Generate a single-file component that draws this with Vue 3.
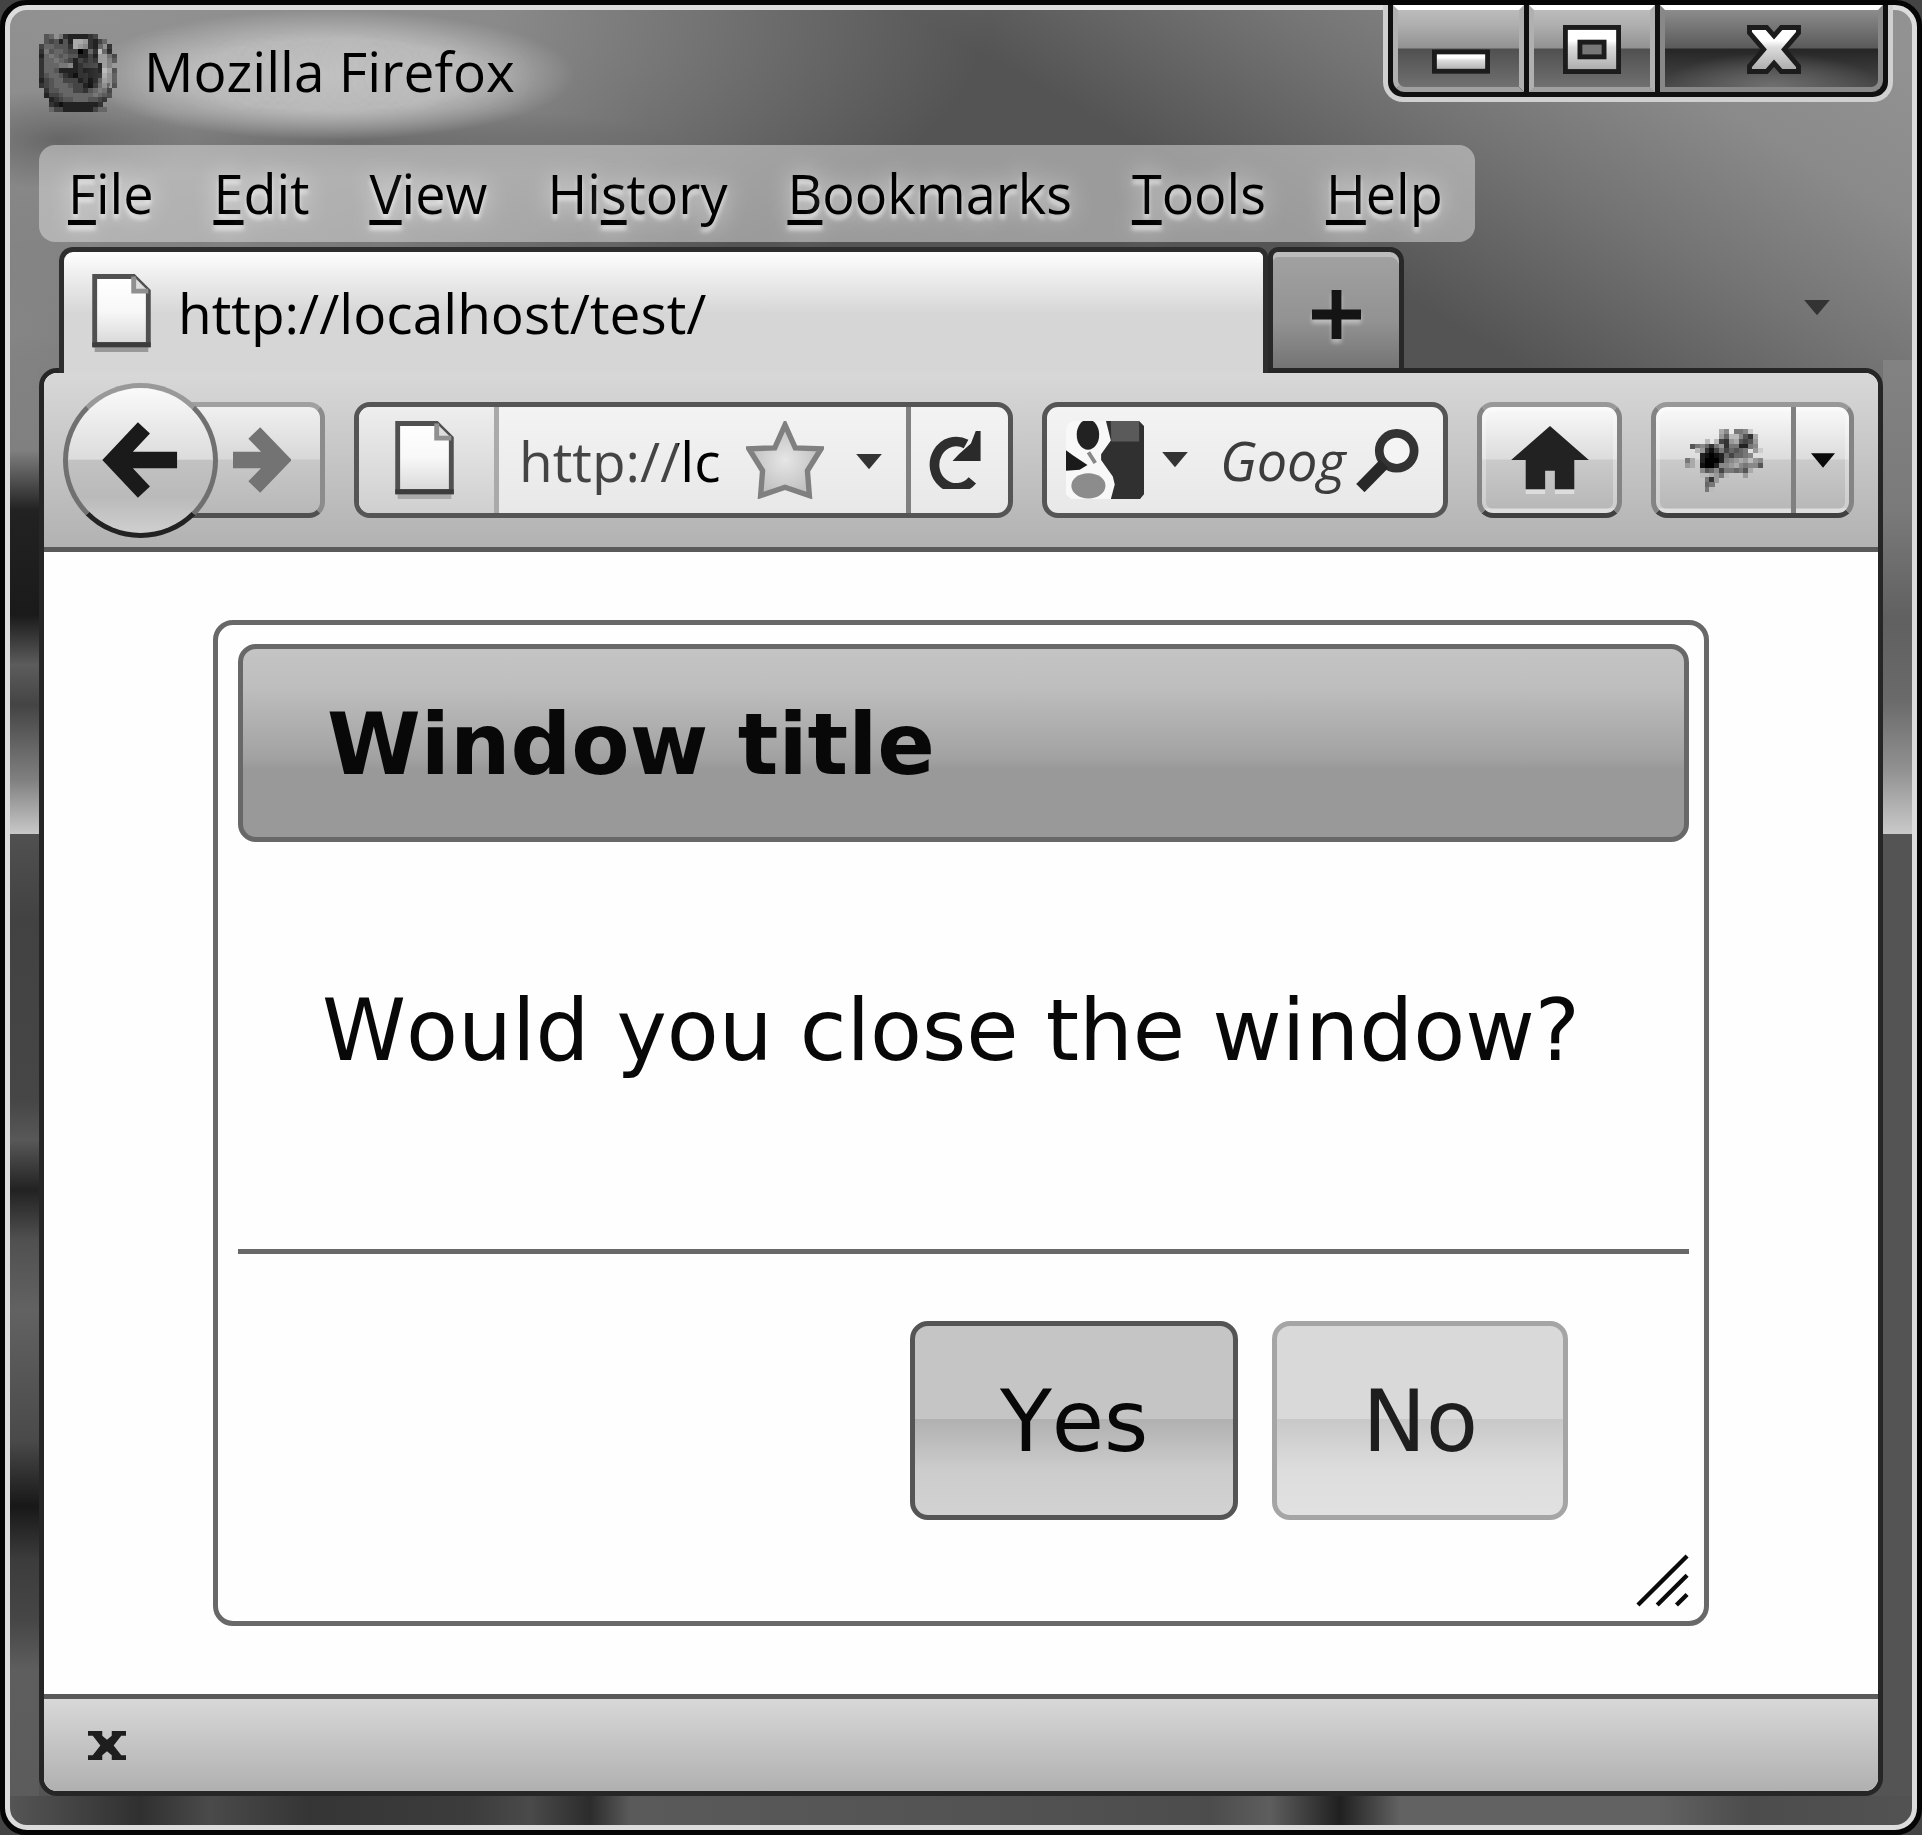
<script setup>
import { ref } from 'vue'

const menus = [
  ['', 'F', 'ile'],
  ['', 'E', 'dit'],
  ['', 'V', 'iew'],
  ['Hi', 's', 'tory'],
  ['', 'B', 'ookmarks'],
  ['', 'T', 'ools'],
  ['', 'H', 'elp'],
]

const address = ref('http://lc')
const query = ref('Goog')

// Each character is one grey level of a 16-column bitmap; a dot is transparent.
const firefoxRows = [
  '.56.73222234....',
  '.545252aa93246..',
  '46655.3a98326.3.',
  '375665440263b62.',
  '267656.522429963',
  '36676.4243439974',
  '366677823444197.',
  '3665222232221b93',
  '3566532133222a84',
  '2456644423125984',
  '34566654421368.3',
  '.35566644356763.',
  '.24456666667654.',
  '..234556665543..',
  '..32122222223...',
  '..644222222466..',
]
const bugRows = [
  '.......a8.778c..',
  '.......96bb853a.',
  '....b.b439a5459.',
  '.57863793772278.',
  '..b9314746567.9c',
  '...21012646678..',
  '7a.20002789a9b98',
  '9a.1002889a87885',
  '...8568477675a..',
  '...bba97b...9...',
  '....739.........',
  '....67..........',
  '....7b..........',
]
const toPixels = (rows) =>
  rows.flatMap((row, y) =>
    [...row].flatMap((c, x) => (/[0-9a-f]/.test(c) ? [{ x, y, fill: `#${c}${c}${c}` }] : [])),
  )
const firefoxPixels = toPixels(firefoxRows)
const bugPixels = toPixels(bugRows)
</script>

<template>
  <div class="window">
    <div class="glass">
      <header class="titlebar">
        <div class="caption">
          <svg class="logo" viewBox="0 0 16 16" shape-rendering="crispEdges" aria-hidden="true">
            <ellipse cx="8" cy="8" rx="7" ry="7" fill="#555" />
            <rect v-for="(p, i) in firefoxPixels" :key="i" :x="p.x" :y="p.y" width="1.04" height="1.04" :fill="p.fill" />
          </svg>
          <h1 class="name">Mozilla Firefox</h1>
        </div>
        <div class="controls">
          <button class="control minimize" type="button" aria-label="Minimize">
            <svg viewBox="0 0 12 10" width="58" height="49" aria-hidden="true">
              <rect x="0.5" y="5.5" width="11" height="4" fill="url(#metal)" stroke="#1c1c1c" />
            </svg>
          </button>
          <button class="control maximize" type="button" aria-label="Maximize">
            <svg viewBox="0 0 12 10" width="58" height="49" preserveAspectRatio="none" aria-hidden="true">
              <defs>
                <linearGradient id="metal" x1="0" y1="0" x2="0" y2="1">
                  <stop offset="0.3" stop-color="#fff" />
                  <stop offset="0.45" stop-color="#dcdcdc" />
                  <stop offset="1" stop-color="#a8a8a8" />
                </linearGradient>
              </defs>
              <rect x="0.5" y="0.5" width="11" height="9" fill="url(#metal)" stroke="#1c1c1c" />
              <rect x="3.5" y="3.5" width="5" height="3" fill="#777" stroke="#1c1c1c" />
            </svg>
          </button>
          <button class="control close" type="button" aria-label="Close">
            <svg viewBox="0 0 11 10" width="54" height="49" aria-hidden="true">
              <path d="M.5.5H4L5.5 2.2 7 .5H10.5V1.6L7.6 5 10.5 8.4V9.5H7L5.5 7.8 4 9.5H.5V8.4L3.4 5 .5 1.6Z" fill="url(#metal)" stroke="#1c1c1c" />
            </svg>
          </button>
        </div>
      </header>

      <nav class="menubar">
        <button v-for="m in menus" :key="m.join('')" class="menu" type="button">{{ m[0] }}<span class="key">{{ m[1] }}</span>{{ m[2] }}</button>
      </nav>

      <div class="tabs">
        <div class="tab">
          <svg class="page-icon" viewBox="0 0 12 16" aria-hidden="true">
            <path d="M.5 15.5H11.5" stroke="#999" />
            <path d="M.5.5H8.5L11.5 3.5V14.5H.5Z" fill="url(#paper)" stroke="#505050" />
            <path d="M8.5.5V3.5H11.5" fill="#ddd" stroke="#909090" />
            <path d="M0 14.5H12" stroke="#3c3c3c" />
            <defs>
              <linearGradient id="paper" x1="0" y1="0" x2="0" y2="1">
                <stop offset="0" stop-color="#fff" />
                <stop offset="0.5" stop-color="#f8f8f8" />
                <stop offset="1" stop-color="#d8d8d8" />
              </linearGradient>
            </defs>
          </svg>
          <span>http://localhost/test/</span>
        </div>
        <button class="new-tab" type="button" aria-label="Open a new tab">
          <svg viewBox="0 0 10 10" width="49" height="49" aria-hidden="true">
            <path d="M5 0V10M0 5H10" stroke="#141414" stroke-width="2" />
          </svg>
        </button>
        <div class="tab-space">
          <button class="bare" type="button" aria-label="List all tabs">
            <svg class="arrow" viewBox="0 0 7 4" aria-hidden="true"><path d="M.8.2H6.2L3.5 3.4Z" fill="#333" /></svg>
          </button>
        </div>
      </div>

      <main class="client">
        <div class="toolbar">
          <div class="history">
            <button class="back" type="button" aria-label="Back">
              <svg viewBox="0 0 16 16" width="78" height="78" aria-hidden="true">
                <path d="M8.6 1.4 2.4 8 8.6 14.6M2.4 8H15.4" fill="none" stroke="#1a1a1a" stroke-width="3.4" />
              </svg>
            </button>
            <button class="forward" type="button" aria-label="Forward">
              <svg viewBox="0 0 12 14" width="58" height="68" aria-hidden="true">
                <path d="M4.4 1.4 9.8 7 4.4 12.6M0 7H9.8" fill="none" stroke="#737373" stroke-width="3.4" />
              </svg>
            </button>
          </div>

          <div class="field location">
            <button class="identity" type="button" aria-label="Site identity">
              <svg class="page-icon" viewBox="0 0 12 16" aria-hidden="true">
                <path d="M.5 15.5H11.5" stroke="#aaa" />
                <path d="M.5.5H8.5L11.5 3.5V14.5H.5Z" fill="url(#paper)" stroke="#505050" />
                <path d="M8.5.5V3.5H11.5" fill="#ddd" stroke="#909090" />
                <path d="M0 14.5H12" stroke="#3c3c3c" />
              </svg>
            </button>
            <input v-model="address" class="address" type="text" aria-label="Address" />
            <button class="bare" type="button" aria-label="Bookmark this page">
              <svg viewBox="0 0 16 16" width="78" height="78" aria-hidden="true">
                <defs>
                  <radialGradient id="star-fill">
                    <stop offset="0" stop-color="#e6e6e6" />
                    <stop offset="1" stop-color="#c0c0c0" />
                  </radialGradient>
                </defs>
                <path d="M8 .8 10.1 5.5 15.4 5.7 12.6 10.2 13 15.3 8 13.6 3 15.3 3.4 10.2.6 5.7 5.9 5.5Z" fill="url(#star-fill)" stroke="#808080" stroke-width="1.1" />
              </svg>
            </button>
            <button class="bare recent" type="button" aria-label="Show history">
              <svg class="arrow" viewBox="0 0 7 4" aria-hidden="true"><path d="M.8.2H6.2L3.5 3.4Z" fill="#333" /></svg>
            </button>
            <button class="reload" type="button" aria-label="Reload">
              <svg viewBox="0 0 11 12" width="54" height="58" aria-hidden="true">
                <path d="M9.3 10.2A4.5 4.8 0 1 1 8 2.7" fill="none" stroke="#2e2e2e" stroke-width="2" />
                <path d="M11 0V6.2H5.2L6.5 4.8 9 2.6 10 0Z" fill="#2a2a2a" />
              </svg>
            </button>
          </div>

          <div class="field search">
            <button class="bare engine" type="button" aria-label="Choose search engine">
              <svg viewBox="0 0 16 16" width="78" height="78" aria-hidden="true">
                <path d="M0 2Q0 0 2 0H15.4L16 1V15L15.4 16H1L0 15Z" fill="#f8f8f8" />
                <path d="M8.2 0H15L16 1V15L15.2 16H9.2L10 13 9.6 11.4 7.2 8V6.8L9.2 4Z" fill="#303030" />
                <path d="M9.2 0H15V4.2H9.3Z" fill="#5a5a5a" />
                <ellipse cx="4.5" cy="2.8" rx="2.3" ry="3.1" fill="#222" />
                <path d="M0 6 1.4 7 4.4 9 2.8 10 0 10.2Z" fill="#1a1a1a" />
                <path d="M4.6 6.4 6 8.6" stroke="#888" stroke-width="0.8" />
                <ellipse cx="4.6" cy="13.3" rx="3.5" ry="2.6" fill="#8c8c8c" />
              </svg>
              <svg class="arrow" viewBox="0 0 7 4" aria-hidden="true"><path d="M.8.2H6.2L3.5 3.4Z" fill="#333" /></svg>
            </button>
            <input v-model="query" class="query" type="text" aria-label="Search" />
            <button class="bare" type="button" aria-label="Search the web">
              <svg viewBox="0 0 13 13" width="63" height="63" aria-hidden="true">
                <ellipse cx="8.4" cy="4.5" rx="3.6" ry="3.6" fill="#f4f4f4" stroke="#333" stroke-width="1.8" />
                <path d="M5.8 7.2.9 12.2" stroke="#282828" stroke-width="2.4" />
              </svg>
            </button>
          </div>

          <button class="tool home" type="button" aria-label="Home">
            <svg viewBox="0 0 16 14" width="78" height="68" aria-hidden="true">
              <path d="M3 13.5H7M9 13.5H13" stroke="#ddd" />
              <path d="M8 0 16 7H13V13H9V9.2H7V13H3V7H0Z" fill="#222" />
            </svg>
          </button>

          <div class="tool debug">
            <button class="bare bug" type="button" aria-label="Inspect with Firebug">
              <svg viewBox="0 0 16 13" width="78" height="63" shape-rendering="crispEdges" aria-hidden="true">
                <rect v-for="(p, i) in bugPixels" :key="i" :x="p.x" :y="p.y" width="1.04" height="1.04" :fill="p.fill" />
              </svg>
            </button>
            <button class="bare options" type="button" aria-label="Firebug options">
              <svg viewBox="0 0 5 3" width="24" height="15" aria-hidden="true"><path d="M0 0H5L2.5 3Z" fill="#0a0a0a" /></svg>
            </button>
          </div>
        </div>

        <div class="page">
          <section class="dialog" role="dialog" aria-labelledby="dialog-title">
            <h2 id="dialog-title" class="dialog-title">Window title</h2>
            <p class="dialog-text">Would you close the window?</p>
            <div class="dialog-actions">
              <button class="action yes" type="button">Yes</button>
              <button class="action no" type="button">No</button>
            </div>
            <svg class="grip" viewBox="0 0 11 11" aria-hidden="true">
              <path d="M.4 10.6 10.6.4M4.4 10.6 10.6 4.4M8.4 10.6 10.6 8.4" stroke="#0a0a0a" stroke-width="0.9" />
            </svg>
          </section>
        </div>

        <footer class="status">
          <button class="bare" type="button" aria-label="Close the add-on bar">
            <svg viewBox="0 0 8 6" width="38" height="29" preserveAspectRatio="none" aria-hidden="true">
              <path d="M0 0H3V1L4 1.8 5 1V0H8V1H7L5.4 3 7 5H8V6H5V5L4 4.2 3 5V6H0V5H1L2.6 3 1 1H0Z" fill="#1e1e1e" />
            </svg>
          </button>
        </footer>
      </main>
    </div>
  </div>
</template>

<style>
body {
  margin: 0;
  background: #444;
}
</style>

<style scoped>
* {
  box-sizing: border-box;
}
button,
input {
  margin: 0;
  padding: 0;
  border: 0;
  background: none;
  color: inherit;
  font: inherit;
}
svg {
  display: block;
  flex: none;
}
.window {
  display: flex;
  min-height: 100vh;
  border: 5px solid #050505;
  border-radius: 26px;
  background: #050505;
  font-family: "Open Sans", "Noto Sans", sans-serif;
  font-kerning: none;
  color: #000;
}
.glass {
  flex: 1;
  min-width: 0;
  display: flex;
  flex-direction: column;
  padding: 0 29px 29px;
  border: 5px solid #dcdcdc;
  border-radius: 22px;
  background:
    linear-gradient(90deg, #555 0, #4a4a4a 40px, #303030 130px, #4a4a4a 200px, #353535 300px, #3c3c3c 460px, #4a4a4a 520px, #2c2c2c 580px, #5a5a5a 620px, #525252 1000px, #4c4c4c 1200px, #5e5e5e 1260px, #202020 1330px, #626262 1390px, #626262 1650px, #4c4c4c 1740px, #525252 100%) 0 100% / 100% 29px no-repeat,
    linear-gradient(#828282 0, #808080 90px, #222 150px, #1a1a1a 255px, #5c5c5c 305px, #444 345px, #808080 420px, #c8c8c8 474px, #505050 474px, #424242 560px, #464646 740px, #585858 780px, #222 830px, #505050 880px, #626262 950px, #4a4a4a 1080px, #181818 1146px, #3c3c3c 1200px, #464646 1260px, #5e5e5e 1310px, #545454 100%) 0 350px / 29px 100% no-repeat,
    linear-gradient(#828282 0, #7a7a7a 150px, #606060 260px, #6a6a6a 340px, #919191 410px, #cacaca 474px, #545454 474px, #545454 100%) 100% 350px / 29px 100% no-repeat,
    radial-gradient(ellipse 330px 36px at 340px 132px, rgba(80, 80, 80, 0.5), rgba(80, 80, 80, 0)) no-repeat,
    radial-gradient(ellipse 130px 50px at 50px 130px, rgba(80, 80, 80, 0.6), rgba(80, 80, 80, 0)) no-repeat,
    radial-gradient(ellipse 900px 340px at 80px 0, #929292 0, #8a8a8a 45%, rgba(84, 84, 84, 0) 100%) no-repeat,
    radial-gradient(ellipse 700px 500px at 0 320px, #858585 0, rgba(84, 84, 84, 0) 100%) no-repeat,
    linear-gradient(30deg, #545454 0, #545454 2020px, #747474 2200px, #8a8a8a 2340px, #929292 2480px) no-repeat,
    #545454;
}
.titlebar {
  display: flex;
  justify-content: space-between;
  align-items: flex-start;
  height: 135px;
}
.caption {
  display: flex;
  align-items: center;
  padding-top: 24px;
}
.logo {
  width: 78px;
  height: 78px;
}
.name {
  margin: -24px 0 -28px -33px;
  padding: 24px 60px 32px;
  font-size: 55px;
  font-weight: 400;
  line-height: 74px;
  background: radial-gradient(closest-side, #c0c0c0 0, rgba(190, 190, 190, 0.9) 55%, rgba(190, 190, 190, 0) 100%);
  text-shadow: 0 0 30px rgba(200, 200, 200, 0.9);
}
.controls {
  display: flex;
  height: 97px;
  margin: -5px -10px 0 0;
  border: 5px solid #d0d0d0;
  border-top: 0;
  border-radius: 0 0 20px 20px;
  background: #101010;
  padding: 0 5px 5px;
  gap: 5px;
}
.control {
  display: flex;
  justify-content: center;
  align-items: flex-start;
  width: 131px;
  padding-top: 15px;
  border: 5px solid #b0b0b0;
  border-top-color: #fff;
  border-bottom-color: #a0a0a0;
  background: linear-gradient(#bbb 0, #b0b0b0 14px, #929292 38px, #505050 39px, #707070 100%);
}
.minimize {
  padding-left: 5px;
  border-bottom-left-radius: 12px;
}
.maximize {
  width: 126px;
}
.close {
  width: 223px;
  padding-left: 5px;
  border-color: #fff #888 #888;
  border-bottom-right-radius: 12px;
  background:
    radial-gradient(ellipse 110px 34px at 50% 100%, #707070, rgba(112, 112, 112, 0)),
    linear-gradient(#8c8c8c 0, #5a5a5a 38px, #262626 39px, #484848 100%);
}
.menubar {
  display: flex;
  align-self: flex-start;
  gap: 60px;
  height: 97px;
  padding: 0 32px 0 29px;
  border-radius: 16px;
  background: rgba(220, 220, 220, 0.52);
}
.menu {
  font-size: 54px;
  line-height: 97px;
  padding-bottom: 4px;
  text-shadow: 0 5px 4px rgba(255, 255, 255, 0.6), 0 0 24px rgba(255, 255, 255, 0.9);
}
.key {
  text-decoration: underline;
  text-decoration-thickness: 5px;
  text-underline-offset: 6px;
  text-decoration-skip-ink: none;
}
.tabs {
  position: relative;
  display: flex;
  height: 131px;
  margin-bottom: -5px;
  padding: 5px 0 0 20px;
}
.tab {
  flex: 1;
  display: flex;
  align-items: center;
  gap: 27px;
  padding: 0 0 0 28px;
  border: 5px solid #2e2e2e;
  border-bottom: 0;
  border-radius: 14px 10px 0 0;
  background: linear-gradient(#fff 0, #f0f0f0 20px, #d6d6d6 62px);
  font-size: 55px;
}
.page-icon {
  width: 59px;
  height: 78px;
}
.new-tab {
  display: flex;
  justify-content: center;
  align-items: center;
  width: 136px;
  margin-bottom: 5px;
  padding-top: 8px;
  border: 5px solid #282828;
  border-bottom: 0;
  border-radius: 10px 14px 0 0;
  background: linear-gradient(#a2a2a2, #929292 60%, #747474);
  box-shadow: inset 0 5px 0 #bcbcbc;
}
.new-tab svg {
  filter: drop-shadow(0 4px 2px rgba(255, 255, 255, 0.4));
}
.tab-space {
  display: flex;
  justify-content: flex-end;
  align-items: center;
  width: 479px;
  padding: 0 49px 4px 0;
}
.arrow {
  width: 34px;
  height: 19px;
}
.client {
  flex: 1;
  display: flex;
  flex-direction: column;
  border: 5px solid #262626;
  border-radius: 18px;
  overflow: hidden;
  background: #fff;
}
.toolbar {
  display: flex;
  align-items: center;
  gap: 29px;
  height: 179px;
  padding: 0 24px 0 19px;
  border-bottom: 5px solid #5a5a5a;
  background: linear-gradient(#d8d8d8, #b2b2b2);
}
.history {
  display: flex;
  align-items: center;
}
.back {
  position: relative;
  display: grid;
  place-items: center;
  width: 155px;
  height: 155px;
  border: 5px solid;
  border-color: #999 #707070 #222;
  border-radius: 50%;
  background: linear-gradient(#fafafa 0, #dcdcdc 49%, #c2c2c2 50%, #bababa 75%, #cfcfcf 100%);
}
.forward {
  display: flex;
  align-items: center;
  width: 135px;
  height: 116px;
  margin-left: -28px;
  padding-left: 38px;
  border: 5px solid;
  border-color: #a0a0a0 #8c8c8c #505050;
  border-radius: 0 16px 16px 0;
  background: linear-gradient(#f0f0f0 0, #d8d8d8 49%, #c8c8c8 50%, #b8b8b8 100%);
}
.field {
  display: flex;
  align-items: center;
  height: 116px;
  border: 5px solid #555;
  border-radius: 16px;
  background: linear-gradient(#f3f3f3, #e8e8e8);
}
.location {
  flex: 1;
  min-width: 0;
  overflow: hidden;
}
.identity {
  display: grid;
  place-items: center;
  width: 140px;
  height: 106px;
  padding-right: 4px;
  border-right: 5px solid #aaa;
  background: linear-gradient(#eee, #cfcfcf);
}
.address {
  flex: 1;
  min-width: 0;
  height: 80px;
  padding-left: 20px;
  font-size: 55px;
  background: linear-gradient(90deg, #444 0 179px, #000 179px) text;
  -webkit-text-fill-color: transparent;
}
.bare {
  display: flex;
  align-items: center;
}
.recent {
  margin: 4px 20px 0 28px;
}
.reload {
  display: grid;
  place-items: center;
  width: 102px;
  height: 106px;
  padding-right: 12px;
  border-left: 5px solid #808080;
}
.search {
  width: 406px;
  padding: 0 24px 0 19px;
}
.engine {
  gap: 14px;
}
.query {
  flex: 1;
  min-width: 0;
  height: 80px;
  padding-left: 28px;
  font-size: 54px;
  font-style: italic;
  color: #3c3c3c;
}
.tool {
  display: flex;
  align-items: center;
  height: 116px;
  border: 5px solid;
  border-color: #989898 #848484 #404040;
  border-radius: 16px;
  background: linear-gradient(#fafafa 0, #dcdcdc 49%, #cacaca 50%, #b8b8b8 95%, #d0d0d0 96%);
  box-shadow: inset 0 0 0 4px rgba(255, 255, 255, 0.3);
}
.home {
  justify-content: center;
  width: 145px;
}
.debug {
  width: 203px;
}
.bug,
.options {
  flex: 1;
  justify-content: center;
  height: 106px;
}
.bug {
  flex: none;
  width: 140px;
  border-right: 5px solid #808080;
}
.page {
  flex: 1;
  display: flex;
  padding: 68px 169px;
  background: #fefefe;
  font-family: "DejaVu Sans", Verdana, sans-serif;
  font-size: 85px;
  line-height: 100px;
  color: #080808;
}
.dialog {
  position: relative;
  flex: 1;
  display: flex;
  flex-direction: column;
  padding: 19px 15px 14px 20px;
  border: 5px solid #686868;
  border-radius: 20px;
}
.dialog-title {
  margin: 0;
  padding: 46px 84px 42px;
  border: 5px solid #686868;
  border-radius: 18px;
  background: linear-gradient(#c4c4c4 0, #bebebe 20%, #a2a2a2 58%, #999 64%);
  font-size: 85px;
  font-weight: 700;
}
.dialog-text {
  flex: 1;
  margin: 0;
  padding: 139px 0 0 84px;
}
.dialog-actions {
  display: flex;
  justify-content: flex-end;
  gap: 34px;
  padding: 67px 121px 87px 0;
  border-top: 5px solid #686868;
}
.action {
  height: 199px;
  padding: 2px 85px 0;
  border: 5px solid #555;
  border-radius: 18px;
  background: linear-gradient(#c5c5c5 0, #c5c5c5 49%, #b0b0b0 49%, #cccccc 76%, #d2d2d2 100%);
}
.no {
  border-color: #a5a5a5;
  background: linear-gradient(#d9d9d9 0, #d9d9d9 49%, #c8c8c8 49%, #dddddd 76%, #e1e1e1 100%);
  color: #1e1e1e;
}
.grip {
  position: absolute;
  right: 15px;
  bottom: 14px;
  width: 53px;
  height: 53px;
}
.status {
  display: flex;
  align-items: center;
  height: 97px;
  padding-left: 44px;
  border-top: 5px solid #5a5a5a;
  background: linear-gradient(#d8d8d8, #b0b0b0);
}
</style>
